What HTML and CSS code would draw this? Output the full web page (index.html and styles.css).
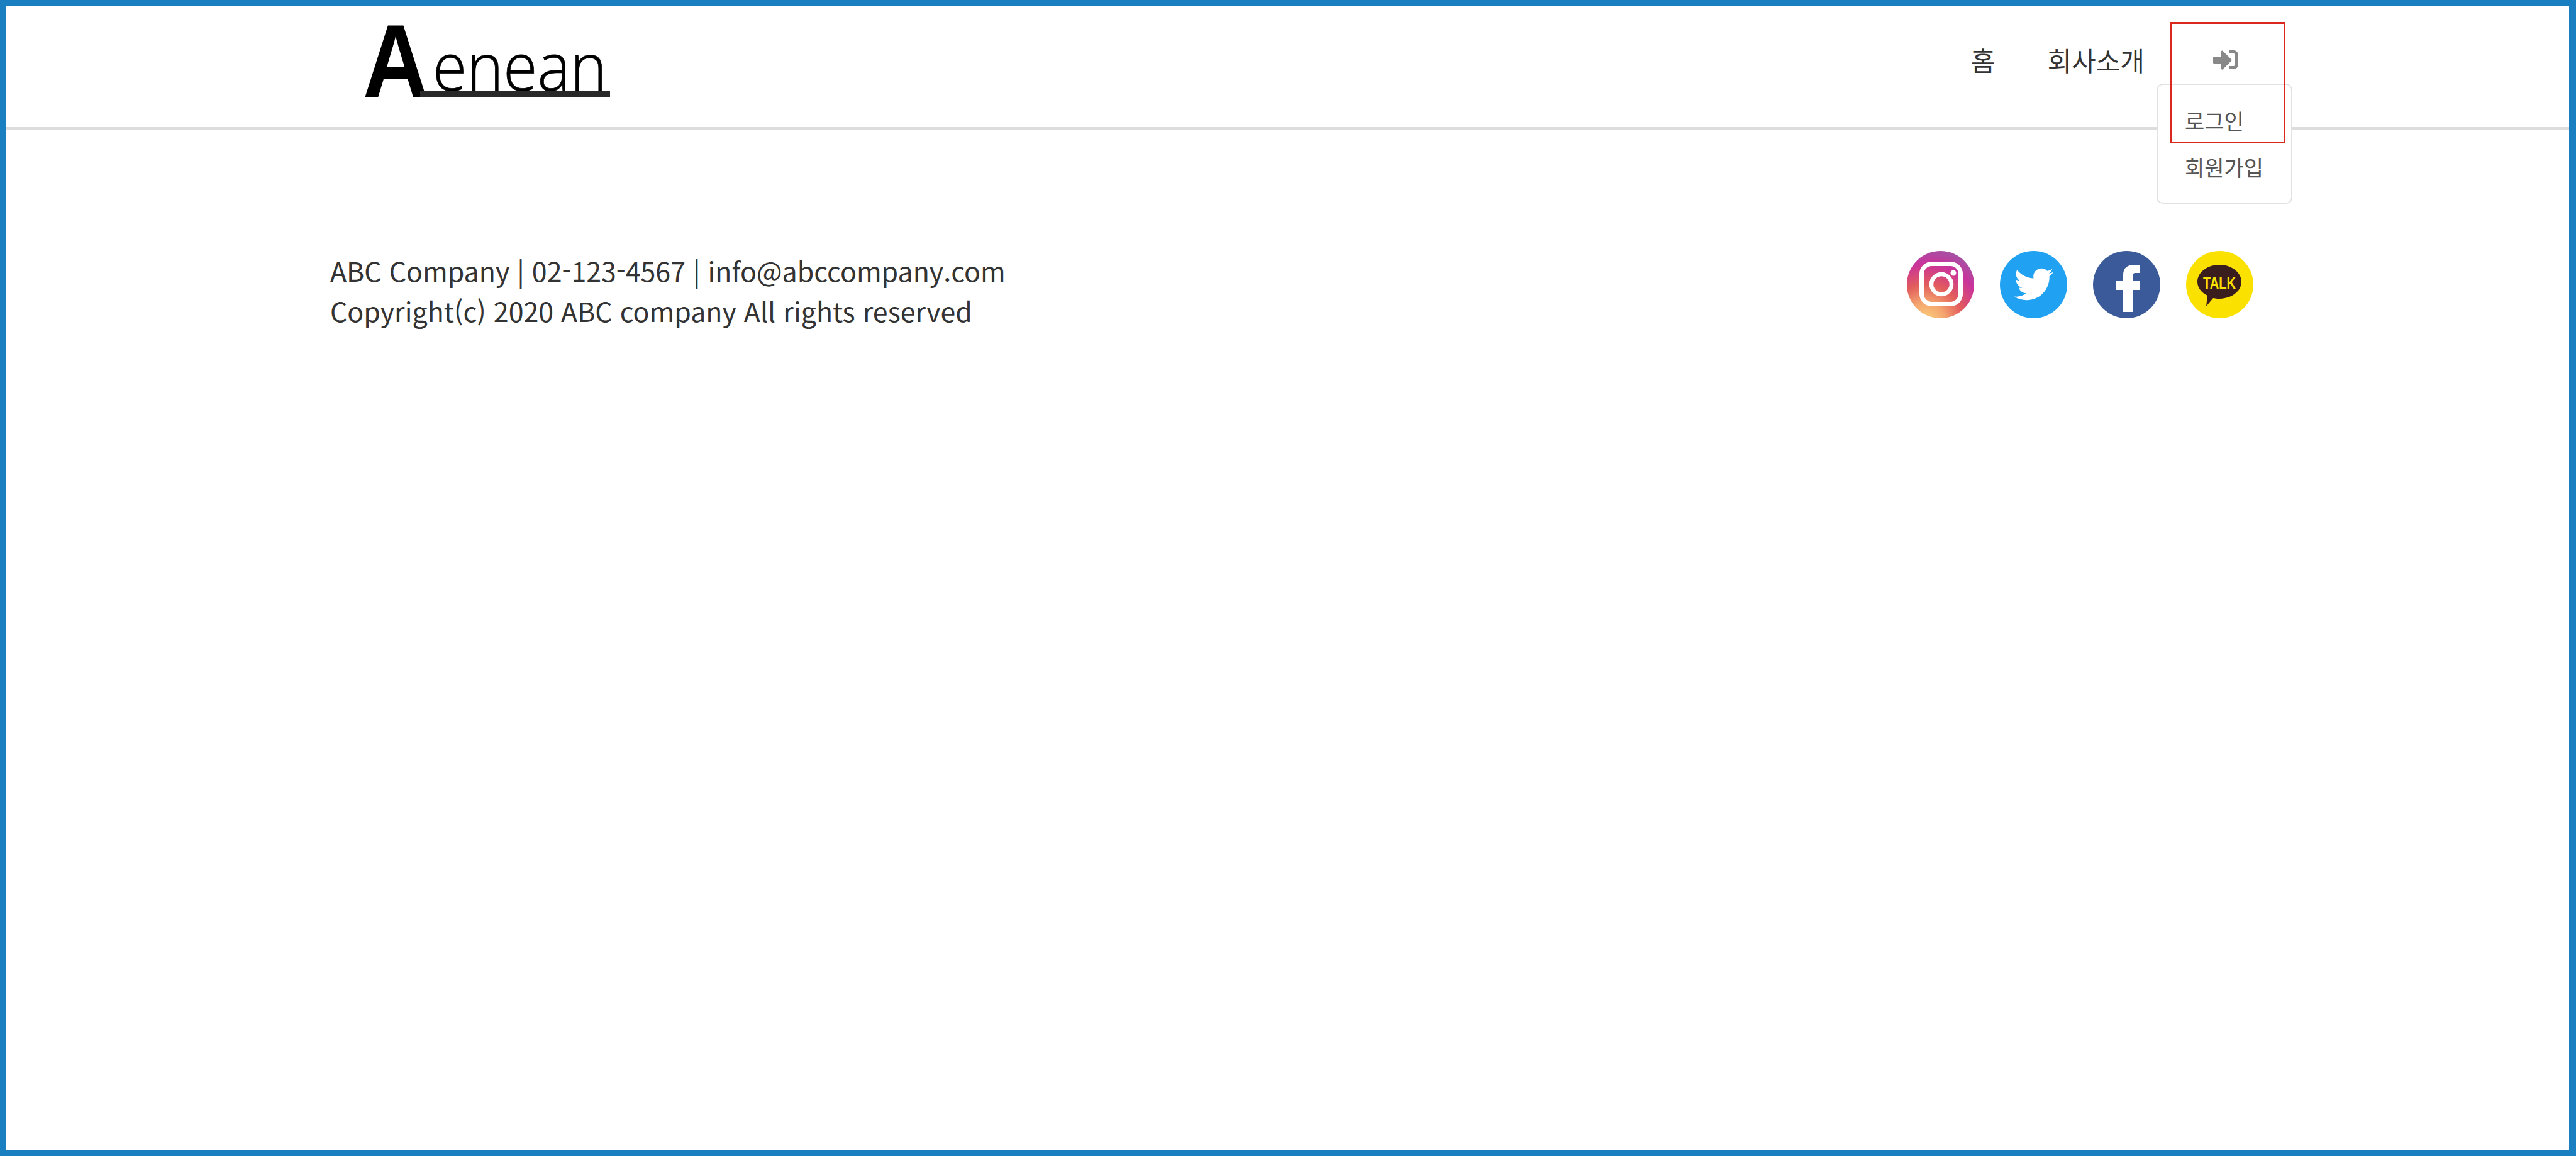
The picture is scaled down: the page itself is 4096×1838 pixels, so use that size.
FILE: index.html
```html
<!DOCTYPE html>
<html lang="ko">
<head>
<meta charset="utf-8">
<title>Aenean</title>
<link rel="stylesheet" href="styles.css">
</head>
<body>
<div class="frame">
  <header class="header">
    <a class="logo"><span class="logo-a">A</span><span class="logo-rest">enean</span><i class="logo-line"></i></a>
    <nav class="nav">
      <a class="nav-home">홈</a>
      <a class="nav-about">회사소개</a>
      <div class="nav-user">
        <svg class="signin" viewBox="0 0 512 512"><path d="M416 448h-84c-6.6 0-12-5.4-12-12v-40c0-6.6 5.4-12 12-12h84c17.7 0 32-14.3 32-32V160c0-17.7-14.3-32-32-32h-84c-6.6 0-12-5.4-12-12V76c0-6.6 5.4-12 12-12h84c53 0 96 43 96 96v192c0 53-43 96-96 96zm-47-201L201 79c-15-15-41-4.5-41 17v96H24c-13.3 0-24 10.7-24 24v96c0 13.3 10.7 24 24 24h136v96c0 21.5 26 32 41 17l168-168c9.3-9.4 9.3-24.6 0-34z"/></svg>
        <div class="dropdown">
          <a>로그인</a>
          <a>회원가입</a>
        </div>
        <div class="highlight"></div>
      </div>
    </nav>
  </header>
  <footer class="footer">
    <div class="info">
      <p>ABC Company | 02-123-4567 | info@abccompany.com</p>
      <p>Copyright(c) 2020 ABC company All rights reserved</p>
    </div>
    <div class="social">
      <svg class="icon" viewBox="0 0 107 107">
        <defs>
          <radialGradient id="ig" cx="0.28" cy="1.05" r="1.15">
            <stop offset="0" stop-color="#fdd27a"/>
            <stop offset="0.25" stop-color="#f4a56f"/>
            <stop offset="0.48" stop-color="#e25c5c"/>
            <stop offset="0.75" stop-color="#c9339b"/>
            <stop offset="1" stop-color="#9a5aa6"/>
          </radialGradient>
        </defs>
        <circle cx="53.5" cy="53.5" r="53.5" fill="url(#ig)"/>
        <rect x="23.5" y="20.5" width="62" height="64" rx="16" fill="none" stroke="#fff" stroke-width="7"/>
        <circle cx="55" cy="53" r="16" fill="none" stroke="#fff" stroke-width="6.5"/>
        <circle cx="74" cy="35" r="4.5" fill="#fff"/>
      </svg>
      <svg class="icon" viewBox="0 0 107 107">
        <circle cx="53.5" cy="53.5" r="53.5" fill="#21a1f1"/>
        <svg x="23" y="22" width="62" height="62" viewBox="0 0 512 512"><path fill="#fff" d="M459.37 151.716c.325 4.548.325 9.097.325 13.645 0 138.72-105.583 298.558-298.558 298.558-59.452 0-114.68-17.219-161.137-47.106 8.447.974 16.568 1.299 25.34 1.299 49.055 0 94.213-16.568 130.274-44.832-46.132-.975-84.792-31.188-98.112-72.772 6.498.974 12.995 1.624 19.818 1.624 9.421 0 18.843-1.3 27.614-3.573-48.081-9.747-84.143-51.98-84.143-102.985v-1.299c13.969 7.797 30.214 12.67 47.431 13.319-28.264-18.843-46.781-51.005-46.781-87.391 0-19.492 5.197-37.36 14.294-52.954 51.655 63.675 129.3 105.258 216.365 109.807-1.624-7.797-2.599-15.918-2.599-24.04 0-57.828 46.782-104.934 104.934-104.934 30.213 0 57.502 12.67 76.67 33.137 23.715-4.548 46.456-13.32 66.599-25.34-7.798 24.366-24.366 44.833-46.132 57.827 21.117-2.273 41.584-8.122 60.426-16.243-14.292 20.791-32.161 39.308-52.628 54.253z"/></svg>
      </svg>
      <svg class="icon" viewBox="0 0 107 107">
        <circle cx="53.5" cy="53.5" r="53.5" fill="#3b5a99"/>
        <path fill="#fff" d="M48 97V62H36V48H48V38C48 27 55 22 65 22H75V35H68C64 35 63 37 63 40V48H75V62H63V97Z"/>
      </svg>
      <svg class="icon" viewBox="0 0 107 107">
        <circle cx="53.5" cy="53.5" r="53.5" fill="#fae100"/>
        <path fill="#3a1d1d" d="M53 22C72 22 88 34 88 49C88 64 72 76 53 76C49 76 46 75.500 43 75L32 88L34 71C24 66 18 58 18 49C18 34 34 22 53 22Z"/>
        <text class="talk" x="27" y="59.500" textLength="52" lengthAdjust="spacingAndGlyphs">TALK</text>
      </svg>
    </div>
  </footer>
</div>
</body>
</html>
```
FILE: styles.css
```css
* { box-sizing: border-box; }
html, body { margin: 0; padding: 0; background: #fff; }
body {
  font-family: "Noto Sans CJK KR", "Noto Sans", sans-serif;
  color: #333;
}
.frame {
  width: 4096px;
  height: 1838px;
  border: solid #1a7fc1;
  border-width: 9px 11px 10px 10px;
  background: #fff;
  overflow: hidden;
}
.header {
  height: 197px;
  border-bottom: 4px solid #ddd;
  display: flex;
  justify-content: space-between;
  align-items: flex-start;
  padding: 0 526px 0 567px;
}
.logo {
  position: relative;
  display: flex;
  align-items: flex-start;
  width: 393px;
  height: 146px;
  color: #000;
}
.logo-a {
  font-family: "Liberation Sans", sans-serif;
  font-weight: 700;
  font-size: 165px;
  line-height: 1;
  margin-top: 6px;
  width: 111px;
  transform: scaleX(0.875);
  transform-origin: left top;
}
.logo-rest {
  font-family: "Open Sans", sans-serif;
  font-weight: 300;
  font-size: 106px;
  line-height: 1;
  margin-top: 41px;
  -webkit-text-stroke: 0.8px #000;
  transform: scaleX(0.93);
  transform-origin: left top;
}
.logo-line {
  position: absolute;
  left: 91px;
  top: 135px;
  width: 302px;
  height: 11px;
  background: #292929;
}
.nav {
  display: flex;
  align-items: flex-start;
  padding-top: 56px;
  font-size: 42px;
  line-height: 60px;
  color: #333;
}
.nav-home { margin-right: 83px; }
.nav-about { margin-right: 109px; }
.nav-user {
  position: relative;
  width: 40px;
  height: 60px;
}
.signin {
  display: block;
  width: 40px;
  height: 40px;
  margin-top: 10px;
  fill: #888;
}
.dropdown {
  position: absolute;
  left: -90px;
  top: 68px;
  width: 216px;
  height: 191px;
  padding: 31px 0 0 43px;
  display: flex;
  flex-direction: column;
  gap: 22px;
  background: #fff;
  border: 2px solid #e2e2e2;
  border-radius: 10px;
  font-size: 34px;
  line-height: 52px;
  color: #555;
}
.highlight {
  position: absolute;
  left: -68px;
  top: -30px;
  width: 183px;
  height: 193px;
  border: 3px solid #d9281e;
}
.footer {
  display: flex;
  justify-content: space-between;
  align-items: flex-start;
  padding: 191px 502px 0 515px;
}
.info p {
  margin: 0;
  font-size: 42.9px;
  line-height: 64px;
  color: #333;
}
.social {
  display: flex;
  gap: 41px;
  margin-top: 2px;
}
.icon {
  display: block;
  width: 107px;
  height: 107px;
}
.talk {
  font-family: "Liberation Sans", sans-serif;
  font-weight: 700;
  font-size: 25px;
  fill: #fae100;
}
```
